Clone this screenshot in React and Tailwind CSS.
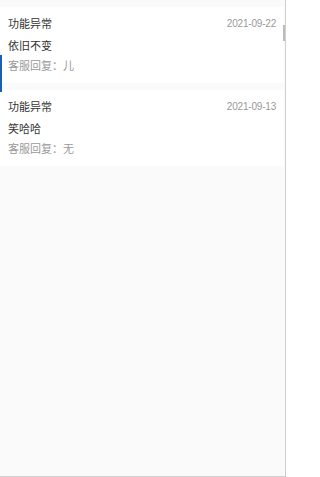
const feedbacks = [
  { type: "功能异常", date: "2021-09-22", content: "依旧不变", reply: "儿" },
  { type: "功能异常", date: "2021-09-13", content: "笑哈哈", reply: "无" },
];

function FeedbackCard({ item }) {
  return (
    <div className="bg-white px-2 pt-[7px] pb-[7px]">
      <div className="flex items-center justify-between leading-[20px]">
        <span className="text-[11px] text-[#333]">{item.type}</span>
        <span className="text-[10px] text-[#999] tracking-[-0.2px]">{item.date}</span>
      </div>
      <div className="mt-[2px] text-[11px] leading-[20px] text-[#333]">{item.content}</div>
      <div className="text-[11px] leading-[20px] text-[#999]">客服回复：{item.reply}</div>
    </div>
  );
}

export default function App() {
  return (
    <div
      className="relative h-[477px] w-[286px] overflow-hidden bg-[#fafafa] border-r border-b border-[#cfcfcf]"
      style={{ fontFamily: '"Liberation Sans", "Noto Sans CJK SC", sans-serif' }}
    >
      <div className="flex flex-col gap-[7px] pt-[7px] pr-px">
        {feedbacks.map((item, i) => (
          <FeedbackCard key={i} item={item} />
        ))}
      </div>

      {/* edge artifacts */}
      <div className="absolute left-0 top-[55px] h-[37px] w-[2px] bg-[#1d5eb0]" />
      <div className="absolute right-0 top-[25px] h-[16px] w-[2px] bg-[#bdbdbd]" />
    </div>
  );
}
